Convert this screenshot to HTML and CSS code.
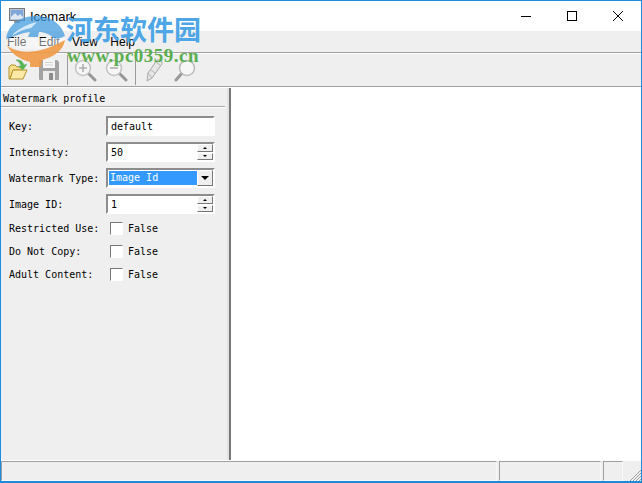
FILE: index.html
```html
<!DOCTYPE html>
<html lang="en">
<head>
  <meta charset="UTF-8" />
  <title>Icemark</title>
  <link rel="stylesheet" href="styles.css">
</head>
<body>
  <div class="window">
    <div class="titlebar">
      <svg class="app-icon" width="16" height="16" viewBox="0 0 16 16">
        <rect x="0.5" y="0.5" width="15" height="12" fill="#b8c4d4" stroke="#777"/>
        <rect x="2" y="2" width="12" height="9" fill="#7fa6d8"/>
        <path d="M2 9 L6 5 L9 8 L11 6 L14 9 V11 H2 Z" fill="#dfe8f2"/>
        <rect x="5" y="13" width="6" height="2" fill="#999"/>
      </svg>
      <span class="title">Icemark</span>
      <div class="win-buttons">
        <svg width="12" height="12" viewBox="0 0 12 12"><path d="M1 6.5 H11" stroke="#000"/></svg>
        <svg width="12" height="12" viewBox="0 0 12 12"><rect x="1.5" y="1.5" width="9" height="9" fill="none" stroke="#000"/></svg>
        <svg width="12" height="12" viewBox="0 0 12 12"><path d="M1 1 L11 11 M11 1 L1 11" stroke="#000" fill="none"/></svg>
      </div>
    </div>

    <div class="menubar">
      <span>File</span><span>Edit</span><span>View</span><span>Help</span>
    </div>

    <div class="toolbar">
      <svg class="tool" width="20" height="22" viewBox="0 0 20 22">
        <path d="M1 20 L1 8 L3 6 H7 L9 8 H14 V11 H5 L2 20 Z" fill="#f6df8e" stroke="#b8902a"/>
        <path d="M2 20 L5 11 H19 L15 20 Z" fill="#fbe9a6" stroke="#b8902a"/>
        <path d="M8 1 Q14 0 16 6 L19 5 L15 11 L10 7 L13 7 Q12 3 8 1 Z" fill="#4fb84a" stroke="#7fae86" stroke-width="0.6"/>
      </svg>
      <svg class="tool save" width="22" height="22" viewBox="0 0 22 22">
        <path d="M1 2 Q1 1 2 1 H19 L21 3 V20 Q21 21 20 21 H2 Q1 21 1 20 Z" fill="#a2a2a2"/>
        <rect x="5" y="1" width="12" height="8" fill="#f6f6f6"/>
        <path d="M7 3.5 H15 M7 6 H15" stroke="#d2d2d2"/>
        <rect x="5" y="12" width="12" height="9" fill="#ececec"/>
        <rect x="11" y="14" width="4" height="7" fill="#8c8c8c"/>
      </svg>
      <span class="sep"></span>
      <svg class="tool zoom-in" width="23" height="23" viewBox="0 0 23 23">
        <path d="M13 13 L21 21" stroke="#979797" stroke-width="3" stroke-linecap="round"/>
        <circle cx="9" cy="9" r="7.5" fill="#f6f6f6" stroke="#c4c4c4" stroke-width="1.6"/>
        <path d="M5 9 H13 M9 5 V13" stroke="#b0b0b0" stroke-width="1.6"/>
      </svg>
      <svg class="tool zoom-out" width="23" height="23" viewBox="0 0 23 23">
        <path d="M13 13 L21 21" stroke="#979797" stroke-width="3" stroke-linecap="round"/>
        <circle cx="9" cy="9" r="7.5" fill="#f6f6f6" stroke="#c4c4c4" stroke-width="1.6"/>
        <path d="M5 9 H13" stroke="#b0b0b0" stroke-width="1.6"/>
      </svg>
      <span class="sep sep-wide"></span>
      <svg class="tool pencil" width="17" height="23" viewBox="0 0 17 23">
        <path d="M1 22 L2 14 L11 1 Q14 0 16 3 L16 5 L6 19 Z" fill="#e6e6e6" stroke="#a8a8a8"/>
        <path d="M2 14 L6 19 M5 11 L9 14 M10 3 L14 6" stroke="#b4b4b4" fill="none"/>
      </svg>
      <svg class="tool finder" width="22" height="23" viewBox="0 0 22 23">
        <path d="M9 13 L2 21" stroke="#999" stroke-width="3" stroke-linecap="round"/>
        <circle cx="13" cy="9" r="7.5" fill="#f7f7f7" stroke="#bcbcbc" stroke-width="1.6"/>
      </svg>
    </div>

    <div class="main">
      <div class="panel">
        <div class="panel-title">Watermark profile</div>
        <div class="form">
          <label>Key:</label>
          <div class="field"><span>default</span></div>

          <label>Intensity:</label>
          <div class="field">
            <span>50</span>
            <div class="spin"><i class="up"></i><i class="down"></i></div>
          </div>

          <label>Watermark Type:</label>
          <div class="field combo">
            <span class="selected">Image Id</span>
            <div class="drop"><b></b></div>
          </div>

          <label>Image ID:</label>
          <div class="field">
            <span>1</span>
            <div class="spin"><i class="up"></i><i class="down"></i></div>
          </div>
        </div>
        <div class="form checks">
          <label>Restricted Use:</label>
          <div class="check"><i></i><span>False</span></div>
          <label>Do Not Copy:</label>
          <div class="check"><i></i><span>False</span></div>
          <label>Adult Content:</label>
          <div class="check"><i></i><span>False</span></div>
        </div>
      </div>
      <div class="splitter"></div>
      <div class="canvas"></div>
    </div>

    <div class="statusbar">
      <div class="pane pane-main"></div>
      <div class="pane pane-mid"></div>
      <div class="pane pane-small"></div>
      <svg class="grip" width="12" height="12" viewBox="0 0 12 12">
        <path d="M12 1 L1 12 M12 4 L4 12 M12 7 L7 12 M12 10 L10 12" stroke="#a0a0a0" fill="none"/>
      </svg>
    </div>
  </div>

  <!-- site stamp that sits over the window -->
  <div class="stamp">
    <svg class="stamp-logo" width="70" height="70" viewBox="0 0 70 70">
      <path d="M6 40 C7 27 17 17 34 16 C50 15 62 24 65 36 L56 40 C50 34 44 32 39 32 L38 37 L28 37 L30 32 C22 33 13 36 6 40 Z" fill="#3e98de" opacity="0.72"/>
      <path d="M14 33 Q26 24 37 22 L31 28 Q22 29 12 36 Z" fill="#fff" opacity="0.7"/>
      <path d="M5 38 H65 V44 Q34 54 7 45 Z" fill="#fff" opacity="0.45"/>
      <path d="M7 46 Q30 60 65 40 Q63 52 48 58 L42 60 L41 67 L30 67 L30 62 Q14 58 7 46 Z" fill="#f09a45" opacity="0.9"/>
    </svg>
    <div class="stamp-name">河东软件园</div>
    <div class="stamp-url">www.pc0359.cn</div>
  </div>
</body>
</html>
```

FILE: styles.css
```css
html, body {
  margin: 0;
  height: 100%;
  overflow: hidden;
}
body {
  position: relative;
  font-family: 'DejaVu Sans Mono', monospace;
  font-size: 10px;
  color: #000;
}
.window {
  box-sizing: border-box;
  width: 642px;
  height: 483px;
  display: flex;
  flex-direction: column;
  background: #efefef;
  border: 1px solid #1a8ce0;
  border-bottom-width: 2px;
}
.titlebar {
  height: 30px;
  display: flex;
  align-items: center;
  background: #fff;
  padding-left: 8px;
}
.app-icon {
  margin-right: 5px;
}
.title {
  font-family: 'Liberation Sans', sans-serif;
  font-size: 13px;
}
.win-buttons {
  margin-left: auto;
  display: flex;
  gap: 34px;
  padding-right: 17px;
}
.menubar {
  height: 21px;
  display: flex;
  align-items: center;
  gap: 12.5px;
  padding-left: 6px;
  font-family: 'Liberation Sans', sans-serif;
  font-size: 12px;
  border-bottom: 1px solid #a0a0a0;
}
.toolbar {
  height: 32px;
  display: flex;
  align-items: center;
  padding-left: 7px;
  border-bottom: 1px solid #a0a0a0;
  border-top: 1px solid #fff;
}
.tool {
  flex: none;
}
.save {
  margin-left: 10px;
}
.sep {
  width: 1px;
  height: 30px;
  background: #9a9a9a;
  margin: 0 6px 0 7px;
}
.zoom-out {
  margin-left: 8px;
}
.sep-wide {
  margin-right: 10px;
}
.finder {
  margin-left: 11px;
}
.main {
  flex: 1;
  display: flex;
  border-top: 1px solid #fff;
  min-height: 0;
}
.panel {
  width: 226px;
  flex: none;
  border-right: 2px solid #e2e2e2;
}
.panel-title {
  height: 18px;
  line-height: 21px;
  padding-left: 2px;
  margin-right: 2px;
  border-bottom: 1px solid #a8a8a8;
  box-shadow: 0 1px 0 #fff;
}
.form {
  display: grid;
  grid-template-columns: 97px 109px;
  grid-auto-rows: 20px;
  row-gap: 6px;
  align-items: center;
  padding: 9px 0 0 8px;
}
.field {
  box-sizing: border-box;
  height: 20px;
  display: flex;
  align-items: center;
  background: #fff;
  border: 2px solid;
  border-color: #8c8c8c #fff #fff #8c8c8c;
  padding-left: 3px;
}
.spin {
  margin-left: auto;
  width: 16px;
  height: 16px;
  display: flex;
  flex-direction: column;
  gap: 1px;
}
.spin i {
  flex: 1;
  background: #efefef;
  border: 1px solid;
  border-color: #fff #777 #777 #fff;
  display: flex;
  align-items: center;
  justify-content: center;
}
.spin i::after {
  content: "";
  border-left: 2px solid transparent;
  border-right: 2px solid transparent;
}
.spin .up::after {
  border-bottom: 2px solid #000;
}
.spin .down::after {
  border-top: 2px solid #000;
}
.combo {
  padding-left: 0;
}
.selected {
  flex: 1;
  height: 14px;
  line-height: 14px;
  margin-left: 1px;
  padding-left: 1px;
  background: #3399ff;
  color: #fff;
}
.drop {
  width: 16px;
  height: 16px;
  background: #efefef;
  border: 1px solid;
  border-color: #fff #777 #777 #fff;
  box-sizing: border-box;
  display: flex;
  align-items: center;
  justify-content: center;
}
.drop b {
  border-left: 4px solid transparent;
  border-right: 4px solid transparent;
  border-top: 4px solid #000;
}
.checks {
  grid-auto-rows: 13px;
  row-gap: 10px;
  padding-top: 8px;
}
.check {
  display: flex;
  align-items: center;
  gap: 5px;
  padding-left: 4px;
}
.check i {
  box-sizing: border-box;
  width: 13px;
  height: 13px;
  background: #fff;
  border: 1px solid;
  border-color: #777 #fff #fff #777;
}
.splitter {
  width: 2px;
  background: #777;
  flex: none;
}
.canvas {
  flex: 1;
  background: #fff;
}
.statusbar {
  height: 20px;
  display: flex;
  align-items: stretch;
  gap: 2px;
  position: relative;
  border-top: 1px solid #fff;
}
.pane {
  box-sizing: border-box;
  border: 1px solid;
  border-color: #a0a0a0 #f8f8f8 #f8f8f8 #a0a0a0;
}
.pane-main {
  width: 496px;
}
.pane-mid {
  width: 102px;
}
.pane-small {
  width: 20px;
}
.grip {
  position: absolute;
  right: 0;
  bottom: 0;
}
.stamp {
  position: absolute;
  left: 0;
  top: 0;
  width: 210px;
  height: 80px;
  pointer-events: none;
}
.stamp-logo {
  position: absolute;
  left: 0;
  top: 0;
}
.stamp-name {
  position: absolute;
  left: 66px;
  top: 13px;
  font-family: 'Noto Sans CJK SC', sans-serif;
  font-weight: 700;
  font-size: 27px;
  line-height: 32px;
  color: #4ea6e6;
  white-space: nowrap;
}
.stamp-url {
  position: absolute;
  left: 67px;
  top: 46px;
  font-family: 'Liberation Serif', serif;
  font-weight: 700;
  font-size: 19px;
  line-height: 20px;
  letter-spacing: 0.5px;
  color: #5aae4e;
  white-space: nowrap;
}
```
